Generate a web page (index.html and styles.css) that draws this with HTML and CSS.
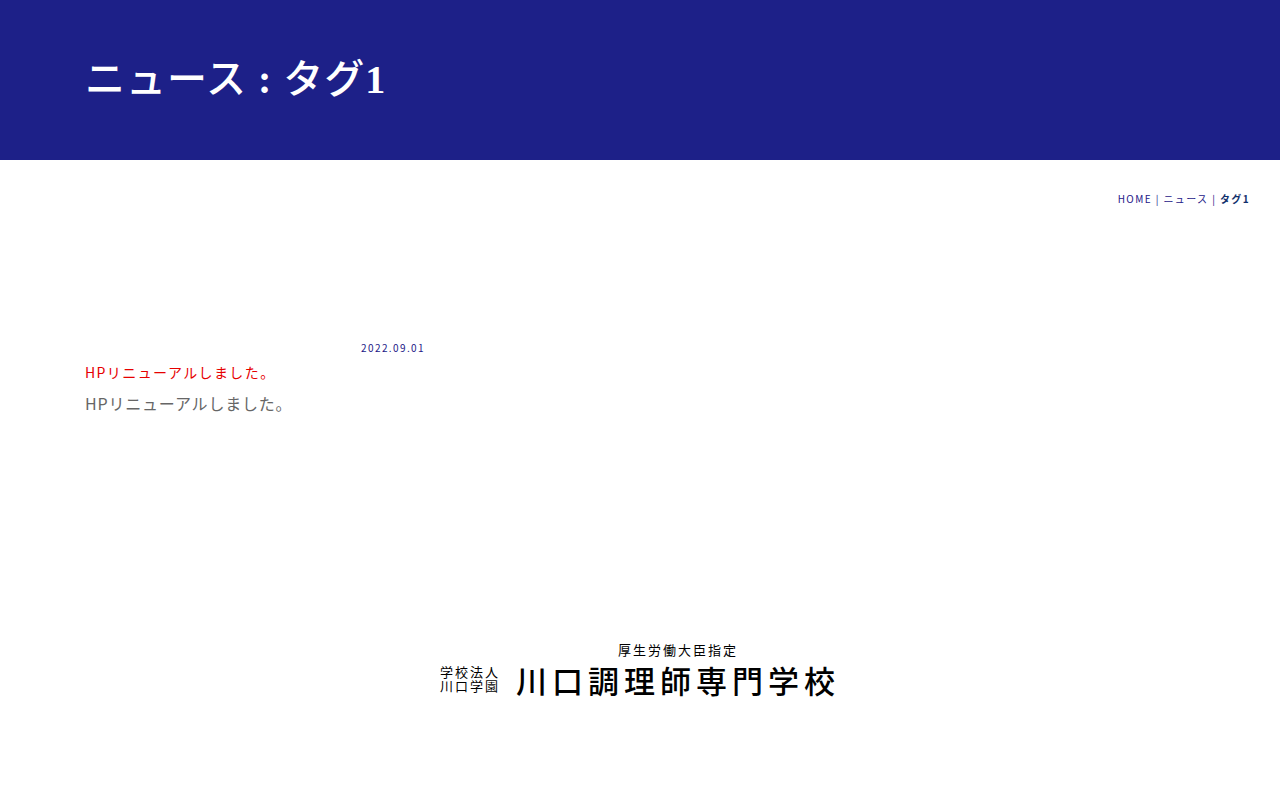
FILE: index.html
```html
<!DOCTYPE html>
<html lang="ja">
<head>
    <meta charset="UTF-8">
    <meta name="viewport" content="width=device-width, initial-scale=1.0">
    <title>タグ1</title>
    <link rel="stylesheet" href="styles.css">
</head>
<body>
    <header class="page-header">
        <div class="container">
            <h1 class="page-title">ニュース<span class="latin"> : </span>タグ<span class="latin">1</span></h1>
        </div>
    </header>

    <nav class="breadcrumb">
        <a href="#">HOME</a> | <a href="#">ニュース</a> | <strong>タグ1</strong>
    </nav>

    <main class="container">
        <article class="news-item">
            <time class="news-date" datetime="2022-09-01">2022.09.01</time>
            <h2 class="news-title"><a href="#">HPリニューアルしました。</a></h2>
            <p class="news-text">HPリニューアルしました。</p>
        </article>
    </main>

    <footer class="footer">
        <div class="school-group">学校法人<br>川口学園</div>
        <div class="school">
            <p class="school-note">厚生労働大臣指定</p>
            <p class="school-name">川口調理師専門学校</p>
        </div>
    </footer>
</body>
</html>
```
FILE: styles.css
```css
* {
    box-sizing: border-box;
}

body {
    margin: 0;
    background: #fff;
    color: #666;
    font-family: "Noto Sans CJK JP", sans-serif;
    font-size: 14px;
    letter-spacing: 0.1em;
}

a {
    color: inherit;
    text-decoration: none;
}

.container {
    max-width: 1110px;
    margin: 0 auto;
}

/* Page title band */
.page-header {
    padding: 48px 0;
    background: #1d2088;
}

.page-title {
    margin: 0;
    color: #fff;
    font-family: "Liberation Serif", "Noto Sans CJK JP", serif;
    font-size: 40px;
    font-weight: 500;
    line-height: 64px;
    letter-spacing: 1px;
}

.page-title .latin {
    font-weight: 700;
}

.breadcrumb {
    padding: 30px 30px 0;
    color: #1d2088;
    font-size: 10px;
    line-height: 18px;
    text-align: right;
}

.breadcrumb strong {
    color: #0f2f6b;
}

/* News list */
.news-item {
    max-width: 340px;
    margin: 130px 0 0;
}

.news-date {
    display: block;
    color: #1d2088;
    font-size: 10px;
    line-height: 20px;
    text-align: right;
}

.news-title {
    margin: 4px 0 8px;
    color: #e60000;
    font-size: 14px;
    font-weight: 400;
    line-height: 20px;
}

.news-text {
    margin: 0;
    font-size: 16px;
    line-height: 26px;
    letter-spacing: 0.05em;
}

/* School name */
.footer {
    display: flex;
    justify-content: center;
    align-items: flex-end;
    gap: 16px;
    padding: 224px 0 100px;
    color: #000;
}

.school-group {
    padding-bottom: 7px;
    font-size: 13px;
    line-height: 14px;
    letter-spacing: 2px;
}

.school-note {
    margin: 0;
    font-size: 13px;
    line-height: 20px;
    letter-spacing: 2px;
    text-align: center;
}

.school-name {
    margin: 0;
    font-size: 31px;
    font-weight: 500;
    line-height: 40px;
    letter-spacing: 5px;
}
```
